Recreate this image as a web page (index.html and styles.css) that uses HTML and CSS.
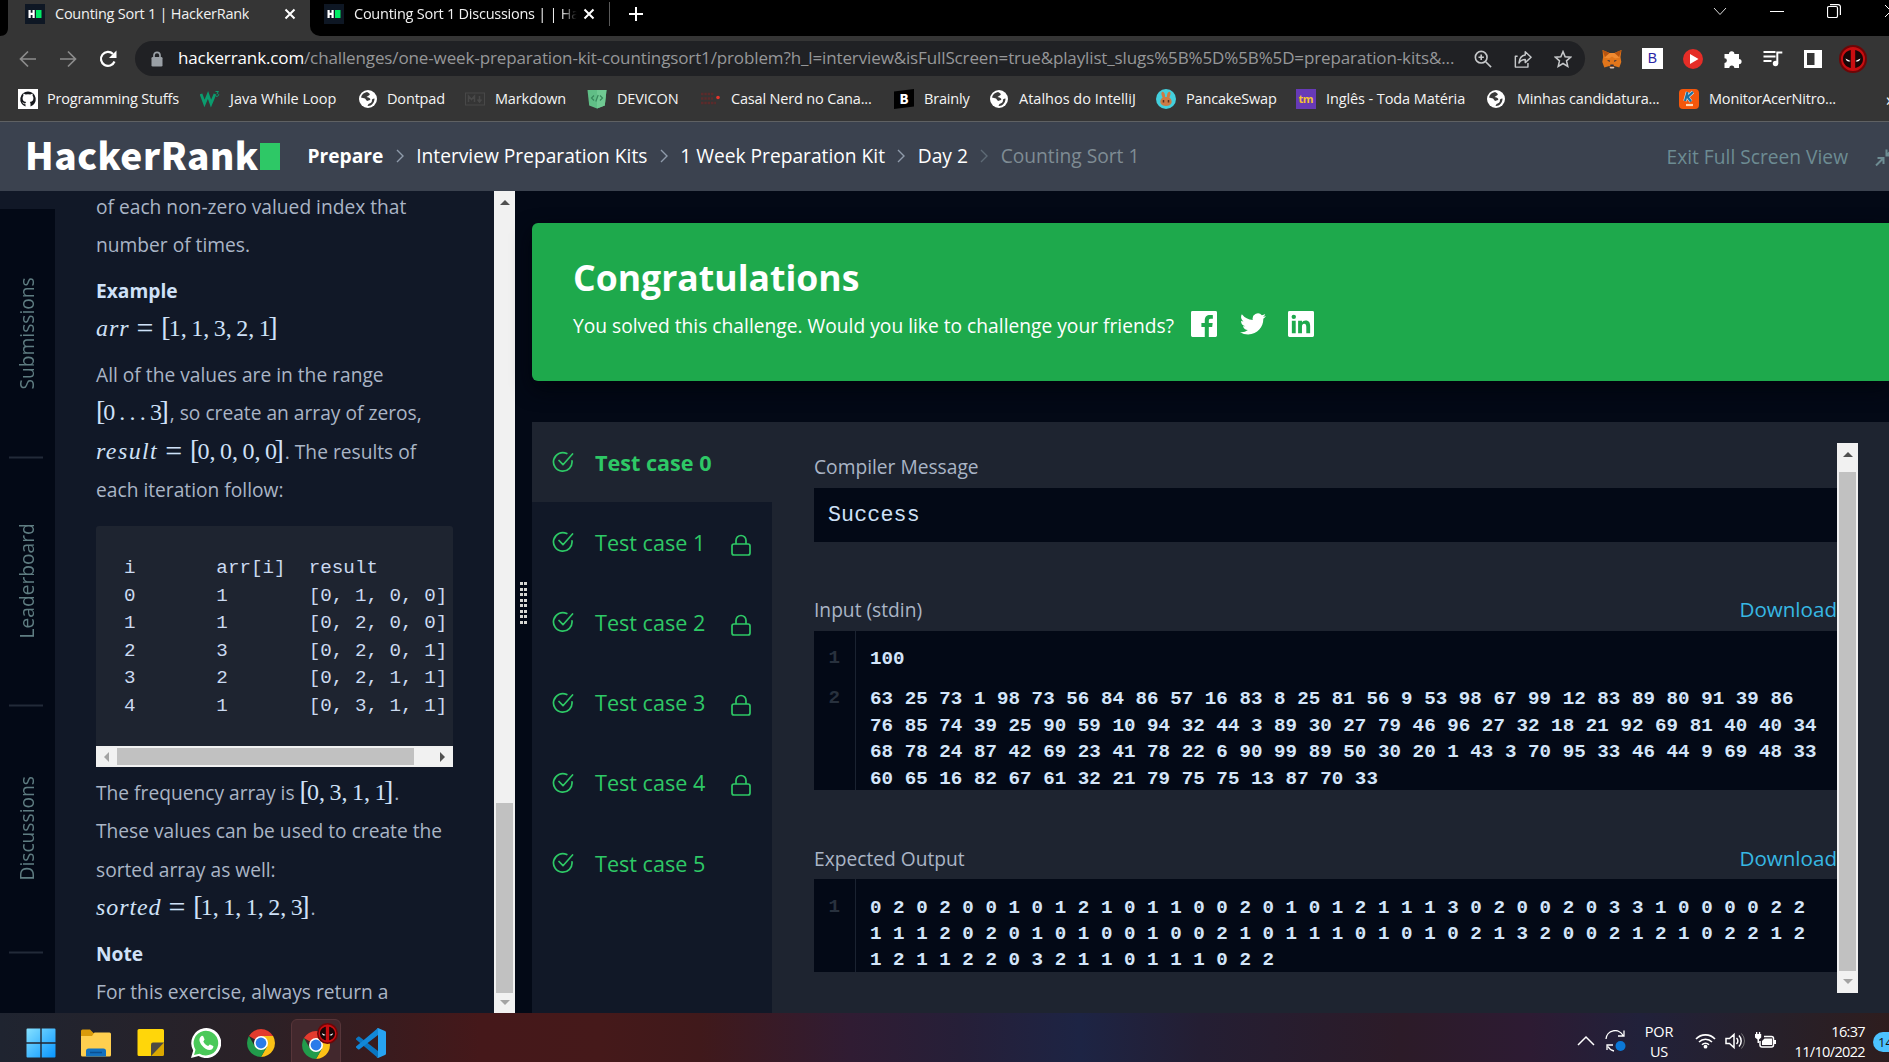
FILE: index.html
```html
<!DOCTYPE html>
<html lang="en">
<head>
<meta charset="utf-8">
<title>Counting Sort 1 | HackerRank</title>
<link rel="stylesheet" href="styles.css">
</head>
<body>
<svg class="defs" aria-hidden="true">
  <defs>
    <symbol id="hr" viewBox="0 0 20 20"><path fill="#0e1724" d="M0 0h20v20H0z"/><path fill="#fff" d="M3.5 6h2.2v2.8h1.8V6h2.2v8H7.500v-3H5.700v3H3.500z"/><path fill="#00ea64" d="M11 6h5.500v8H11z"/></symbol>
    <symbol id="close" viewBox="0 0 12 12"><path d="M1.500 1.500l9 9M10.500 1.500l-9 9" stroke="#fff" stroke-width="2" fill="none"/></symbol>
    <symbol id="chev" viewBox="0 0 8 16"><path d="M1 2l6 6-6 6" fill="none" stroke="currentColor" stroke-width="1.400"/></symbol>
    <symbol id="globe" viewBox="0 0 20 20"><circle cx="10" cy="10" r="9" fill="#fff"/><path fill="#3a3a3a" d="M9 3c-3 .5-5.500 2.500-6 5.500l4 1 2 2.500 3-1c1-1-.5-2-1.500-2.500l-2-.5 3-2c1-1-.5-2-2.500-3zM16.500 9.500c-2 0-3 1-2.500 2.500-.5 2-2 2.500-3.500 3L9.500 17c4 .3 7-3 7-7.500z"/></symbol>
    <symbol id="check" viewBox="0 0 22 22"><path d="M20 9.800A9.300 9.300 0 1 1 14.800 2.500M7 9.500l4 4.200L20.500 3" fill="none" stroke="#2ec866" stroke-width="1.700" stroke-linecap="round" stroke-linejoin="round"/></symbol>
    <symbol id="lock" viewBox="0 0 22 22"><rect x="2" y="10" width="18" height="11" rx="2" fill="none" stroke="#2ec866" stroke-width="1.700"/><path d="M6 10V6.500a5 5 0 0 1 10 0V10" fill="none" stroke="#2ec866" stroke-width="1.700"/></symbol>
    <symbol id="chrome" viewBox="0 0 28 28"><path fill="#e33b2e" d="M14 14L1.900 7A14 14 0 0 1 26.100 7z"/><path fill="#fbc116" d="M14 14V7h12.100A14 14 0 0 1 14 28l6-10.500z"/><path fill="#219b4b" d="M14 14l6 3.500L14 28A14 14 0 0 1 1.900 7L8 17.500z"/><circle cx="14" cy="14" r="7" fill="#fff"/><circle cx="14" cy="14" r="5.400" fill="#2a7be9"/></symbol>
    <symbol id="mask" viewBox="0 0 28 28"><circle cx="14" cy="14" r="13" fill="#c90d10" stroke="#6d0607" stroke-width="2"/><path fill="#170607" d="M11.800 5v18C7 22 4 18.500 4 14s3-8 7.800-9zM16.200 5v18c4.800-1 7.800-4.500 7.800-9s-3-8-7.800-9z"/><path fill="#fff" d="M6.500 13.500l5 2.500c-2 1.200-4.200.4-5-2.500zM21.500 13.500l-5 2.500c2 1.200 4.200.4 5-2.500z"/></symbol>
  </defs>
</svg>

<div class="tabs">
  <svg class="corner" viewBox="0 0 10 36"><path fill="#353535" d="M0 36c5 0 8-3 8-8V0h2v36z"/></svg>
  <div class="tab tab-active"><svg class="fav"><use href="#hr"/></svg><span class="tab-title">Counting Sort 1 | HackerRank</span><svg class="x"><use href="#close"/></svg></div>
  <div class="tab tab-back"><svg class="fav"><use href="#hr"/></svg><span class="tab-title fade">Counting Sort 1 Discussions | | Ha</span><svg class="x"><use href="#close"/></svg></div>
  <svg class="plus" viewBox="0 0 16 16"><path d="M8 1v14M1 8h14" stroke="#fff" stroke-width="2"/></svg>
  <div class="window-controls">
    <svg width="14" height="14" viewBox="0 0 14 14"><path d="M1 4l6 6.500L13 4" fill="none" stroke="#ddd"/></svg>
    <svg width="14" height="14" viewBox="0 0 14 14"><path d="M0 7.500h14" stroke="#fff"/></svg>
    <svg width="14" height="14" viewBox="0 0 14 14"><rect x=".5" y="2.500" width="10" height="11" rx="1.500" fill="none" stroke="#fff" stroke-width="1.200"/><path d="M3 .6h8a2.300 2.300 0 0 1 2.400 2.400v8" fill="none" stroke="#fff" stroke-width="1.200"/></svg>
    <svg width="14" height="14" viewBox="0 0 14 14"><path d="M1 1l12 12M13 1L1 13" stroke="#fff"/></svg>
  </div>
</div>

<div class="toolbar">
  <svg class="nav" viewBox="0 0 18 18"><path d="M17 9H2M9 1.500L1.500 9 9 16.500" fill="none" stroke="#8c8c8c" stroke-width="1.700"/></svg>
  <svg class="nav nav-fwd" viewBox="0 0 18 18"><path d="M1 9h15M9 1.500L16.500 9 9 16.500" fill="none" stroke="#8c8c8c" stroke-width="1.700"/></svg>
  <svg class="nav nav-reload" viewBox="0 0 18 18"><path d="M15.500 11.500A7 7 0 1 1 14 4" fill="none" stroke="#fff" stroke-width="2.200"/><path fill="#fff" d="M17.500.5v7.500H10z"/></svg>
  <div class="omnibox">
    <svg class="padlock" viewBox="0 0 12 16"><path d="M3 7V4.300a3 3 0 0 1 6 0V7" fill="none" stroke="#9aa0a6" stroke-width="1.700"/><rect x=".5" y="6" width="11" height="9.500" rx="1.300" fill="#9aa0a6"/></svg>
    <span class="url"><span class="host">hackerrank.com</span>/challenges/one-week-preparation-kit-countingsort1/problem?h_l=interview&amp;isFullScreen=true&amp;playlist_slugs%5B%5D%5B%5D=preparation-kits&amp;...</span>
    <svg class="omni-icon" viewBox="0 0 20 20"><g fill="none" stroke="#c6c8ca" stroke-width="1.800"><circle cx="8" cy="8" r="6.500"/><path d="M13 13l6 6M5 8h6M8 5v6"/></g></svg>
    <svg class="omni-icon" viewBox="0 0 20 20"><g fill="none" stroke="#c6c8ca" stroke-width="1.600"><path d="M4 7H1.500v12h14v-4.500M12.500 5.500V2L19 8l-6.500 6v-3.500C9 10.500 7 12 5.500 14.500 6 9 8.500 6 12.500 5.500z" stroke-linejoin="round"/></g></svg>
    <svg class="omni-icon" viewBox="0 0 20 20"><path d="M10 1.800l2.400 5.700 6.200.5-4.700 4.100 1.400 6.100L10 15l-5.300 3.200 1.400-6.100L1.400 8l6.200-.5z" fill="none" stroke="#c6c8ca" stroke-width="1.700"/></svg>
  </div>
  <div class="extensions">
    <svg viewBox="0 0 20 20"><path fill="#e2761b" d="M.5 1l7 3h5l7-3-1 7 .8 5-2 5.500-5-1.500-1 1h-3l-1-1-5 1.500-2-5.500.8-5z"/><path fill="#f08a30" d="M2 8.500L7.500 4h5L18 8.500l-5 1-3-2-3 2z"/><path fill="#b8540f" d="M.5 1l7 3L3 8zM19.500 1l-7 3L17 8z"/><path fill="#2c2f3e" d="M5 11l3 .5-.5 1.500zM15 11l-3 .5.5 1.500zM8.500 15.500h3L12 17.500H8z"/><path fill="#d7c1b3" d="M7.500 18h5l-.8 1.600H8.300z"/></svg>
    <span class="ext-b">B</span>
    <svg viewBox="0 0 20 20"><circle cx="10" cy="10" r="10" fill="#e52d27"/><path fill="#fff" d="M7 5l8.500 5L7 15z"/></svg>
    <svg viewBox="0 0 20 20"><path fill="#fff" d="M1.500 5H6a2.700 2.700 0 1 1 5.400 0H16v5a2.600 2.600 0 1 1 0 5.200V19h-4.700a2.500 2.500 0 0 0-5 0H1.500v-5a2.400 2.400 0 0 0 0-4.800z"/></svg>
    <svg viewBox="0 0 20 20"><path d="M.5 3h12M.5 7.500h12M.5 12h8" stroke="#fff" stroke-width="2"/><circle cx="12.500" cy="14.500" r="2.700" fill="#fff"/><path d="M14.300 14.500V3.500h5" fill="none" stroke="#fff" stroke-width="2"/></svg>
    <svg viewBox="0 0 20 20"><path fill="#fff" fill-rule="evenodd" d="M1 1h18v18H1zM4 4v12h7.500V4z"/></svg>
    <svg class="avatar"><use href="#mask"/></svg>
  </div>
</div>

<div class="bookmarks">
  <span class="bm"><svg viewBox="0 0 20 20"><path fill="#fff" d="M0 0h20v20H0z"/><path fill="#16181c" d="M10 2.500a7.700 7.700 0 0 0-2.500 15v-2.200c-2 .4-2.500-1-3.300-2 1.300-.2 1.500 1.700 3.300 1 .1-.6.4-1 .7-1.200-3-.4-4-2-3.500-5.100l.7-1.200-.1-2.300 2.400 1a8 8 0 0 1 4.600 0l2.400-1-.1 2.300.7 1.200c.5 3.100-.5 4.700-3.500 5.100.5.500.7 1.100.7 2v2.400A7.700 7.700 0 0 0 10 2.500z"/></svg>Programming Stuffs</span>
  <span class="bm"><svg viewBox="0 0 20 20"><path d="M1 5l3.500 9.500L8 6l3 8.500L15 5" fill="none" stroke="#0b9c6e" stroke-width="2.800"/><path d="M15.500 2.500h3l-1.500 2c3 .3 1.500 3.500-1 2.700" fill="none" stroke="#0b9c6e"/></svg>Java While Loop</span>
  <span class="bm"><svg><use href="#globe"/></svg>Dontpad</span>
  <span class="bm"><svg viewBox="0 0 20 20"><rect x=".5" y="4" width="19" height="12" fill="none" stroke="#484848"/><path d="M3.500 13V7l3 3.500 3-3.500v6M14.500 7v5M12.500 10.500l2 2.500 2-2.500" fill="none" stroke="#484848" stroke-width="1.500"/></svg>Markdown</span>
  <span class="bm"><svg viewBox="0 0 20 20"><path fill="#60be86" d="M.5 1h19l-1.700 15.500L10 19.500l-7.800-3z"/><path fill="#70c992" d="M10 1h9.500l-1.700 15.500L10 19.500z"/><path d="M7 6.500L4.500 9 7 11.500M13 6.500L15.500 9 13 11.500M11.200 6l-2.400 6.500" fill="none" stroke="#37875b" stroke-width="1.200"/></svg>DEVICON</span>
  <span class="bm"><svg viewBox="0 0 20 20"><path d="M1 5h13M1 9.500h12M1 14h15" stroke="#5b2b2b" stroke-width="2.500" stroke-dasharray="2.500 .8"/><circle cx="18" cy="8.500" r="1.800" fill="#e5352c"/></svg>Casal Nerd no Cana...</span>
  <span class="bm"><svg viewBox="0 0 20 20"><path d="M0 2.500L20 0v17.500L0 20z"/><text x="5.500" y="15" class="brainly">B</text></svg>Brainly</span>
  <span class="bm"><svg><use href="#globe"/></svg>Atalhos do IntelliJ</span>
  <span class="bm"><svg viewBox="0 0 20 20"><circle cx="10" cy="10" r="10" fill="#43cfdc"/><path fill="#cc7a45" d="M6 3c2-1 3 2 3.200 5h1.600C11 5 12 2 14 3c1.500 1-.2 4-.5 5.800 2 1.200 2.500 3.500 2 5.200-.8 2-2.800 3-5.500 3s-4.700-1-5.500-3c-.5-1.700 0-4 2-5.200C6.200 7 4.500 4 6 3z"/><path d="M7.500 11v2.500M12.500 11v2.500" stroke="#5a2d1a" stroke-width="1.500"/></svg>PancakeSwap</span>
  <span class="bm"><svg viewBox="0 0 20 20"><path fill="#673ab7" d="M0 0h20v20H0z"/><text x="2.500" y="14" class="tm">tm</text></svg>Inglês - Toda Matéria</span>
  <span class="bm"><svg><use href="#globe"/></svg>Minhas candidatura...</span>
  <span class="bm"><svg viewBox="0 0 20 20"><rect width="20" height="20" rx="4" fill="#f4570c"/><path d="M8.500 3L6 12M14 3L8.500 8l3.500 4.500" fill="none" stroke="#cfe6f5" stroke-width="3.400"/><path d="M8.500 3L6 12M14 3L8.500 8l3.500 4.500" fill="none" stroke="#1b6f9f" stroke-width="2.200"/><path d="M7 16h7" stroke="#ffd9b8" stroke-width="2.200"/></svg>MonitorAcerNitro...</span>
  <span class="more">»</span>
</div>

<header class="header">
  <div class="logo"><span class="logo-text">HackerRank</span><span class="logo-block"></span></div>
  <nav class="crumbs">
    <b>Prepare</b><svg><use href="#chev"/></svg>
    <span>Interview Preparation Kits</span><svg><use href="#chev"/></svg>
    <span>1 Week Preparation Kit</span><svg><use href="#chev"/></svg>
    <span>Day 2</span><svg class="dim"><use href="#chev"/></svg>
    <span class="current">Counting Sort 1</span>
  </nav>
  <div class="exit">Exit Full Screen View
    <svg viewBox="0 0 20 20"><path d="M1 18.500l7-7M2.500 11h6v6M19 1l-7 7M11.500 2.500v6h6" fill="none" stroke="#6d8c93" stroke-width="2"/></svg>
  </div>
</header>

<main class="main">
  <aside class="rail"><div>Submissions</div><div>Leaderboard</div><div>Discussions</div></aside>

  <section class="problem">
    <p class="intro">of each non-zero valued index that<br>number of times.</p>
    <p><b>Example</b><br><span class="math"><i>arr</i><span class="eq">=</span><span class="br">[</span>1<s>,</s>1<s>,</s>3<s>,</s>2<s>,</s>1<span class="br">]</span></span></p>
    <p>All of the values are in the range<br><span class="math"><span class="br">[</span>0<span class="dots">...</span>3<span class="br">]</span></span>, so create an array of zeros,<br><span class="math"><i class="wide">result</i><span class="eq">=</span><span class="br">[</span>0<s>,</s>0<s>,</s>0<s>,</s>0<span class="br">]</span></span>. The results of<br>each iteration follow:</p>
    <div class="sample">
      <pre>i       arr[i]  result
0       1       [0, 1, 0, 0]
1       1       [0, 2, 0, 0]
2       3       [0, 2, 0, 1]
3       2       [0, 2, 1, 1]
4       1       [0, 3, 1, 1]</pre>
      <div class="hbar"><span class="arrow left"></span><span class="hthumb"></span><span class="arrow right"></span></div>
    </div>
    <p>The frequency array is <span class="math"><span class="br">[</span>0<s>,</s>3<s>,</s>1<s>,</s>1<span class="br">]</span></span>.<br>These values can be used to create the<br>sorted array as well:<br><span class="math"><i>sorted</i><span class="eq">=</span><span class="br">[</span>1<s>,</s>1<s>,</s>1<s>,</s>2<s>,</s>3<span class="br">]</span></span>.</p>
    <p><b>Note</b><br>For this exercise, always return a</p>
  </section>

  <div class="vbar vbar-left"><span class="arrow up"></span><span class="vthumb"></span><span class="arrow down"></span></div>
  <div class="resizer"><span class="grip"></span></div>

  <section class="results">
    <div class="congrats">
      <h1>Congratulations</h1>
      <div class="share">You solved this challenge. Would you like to challenge your friends?
        <svg viewBox="0 0 27 27"><path fill="#fff" d="M1.500 0h24A1.500 1.500 0 0 1 27 1.500v24a1.500 1.500 0 0 1-1.500 1.500h-7V16.600H22l.5-4.100h-4V10c0-1.200.4-2 2-2h2.200V4.300C22.300 4.200 21 4.100 19.600 4.100c-3.100 0-5.300 1.900-5.300 5.400v3h-3.500v4.100h3.500V27H1.500A1.500 1.500 0 0 1 0 25.500v-24A1.500 1.500 0 0 1 1.500 0z"/></svg>
        <svg viewBox="0 0 24 24"><path fill="#fff" d="M24 4.600a10 10 0 0 1-2.800.8 5 5 0 0 0 2.100-2.700 10 10 0 0 1-3.100 1.200 4.900 4.900 0 0 0-8.400 4.500A14 14 0 0 1 1.700 3.100a4.900 4.900 0 0 0 1.500 6.600 5 5 0 0 1-2.200-.6v.1a4.900 4.900 0 0 0 3.900 4.800 5 5 0 0 1-2.200.1 4.900 4.900 0 0 0 4.600 3.400A10 10 0 0 1 0 19.500a14 14 0 0 0 7.500 2.200c9.100 0 14.300-7.700 14-14.600A10 10 0 0 0 24 4.600z"/></svg>
        <svg viewBox="0 0 27 27"><path fill="#fff" fill-rule="evenodd" d="M1.500 0h24A1.500 1.500 0 0 1 27 1.500v24a1.500 1.500 0 0 1-1.500 1.500h-24A1.500 1.500 0 0 1 0 25.500v-24A1.500 1.500 0 0 1 1.500 0zM4 10.200V23h4V10.200zM6 3.800a2.300 2.300 0 1 0 0 4.600 2.300 2.300 0 0 0 0-4.600zM10.500 10.200V23h4v-6.500c0-1.800.5-3.200 2.300-3.200s2.200 1.500 2.200 3.300V23h4v-7.200c0-3.600-1-6-4.700-6-1.900 0-3.200 1-3.800 2.100v-1.700z"/></svg>
      </div>
    </div>
    <div class="panel">
      <ul class="cases">
        <li class="on"><svg><use href="#check"/></svg><span>Test case 0</span></li>
        <li><svg><use href="#check"/></svg><span>Test case 1</span><svg class="lk"><use href="#lock"/></svg></li>
        <li><svg><use href="#check"/></svg><span>Test case 2</span><svg class="lk"><use href="#lock"/></svg></li>
        <li><svg><use href="#check"/></svg><span>Test case 3</span><svg class="lk"><use href="#lock"/></svg></li>
        <li><svg><use href="#check"/></svg><span>Test case 4</span><svg class="lk"><use href="#lock"/></svg></li>
        <li><svg><use href="#check"/></svg><span>Test case 5</span></li>
      </ul>
      <div class="output">
        <div class="label first">Compiler Message</div>
        <div class="message">Success</div>
        <div class="label">Input (stdin)<a>Download</a></div>
        <div class="code input">
          <span class="num">1</span><pre>100</pre>
          <span class="num">2</span><pre>63 25 73 1 98 73 56 84 86 57 16 83 8 25 81 56 9 53 98 67 99 12 83 89 80 91 39 86
76 85 74 39 25 90 59 10 94 32 44 3 89 30 27 79 46 96 27 32 18 21 92 69 81 40 40 34
68 78 24 87 42 69 23 41 78 22 6 90 99 89 50 30 20 1 43 3 70 95 33 46 44 9 69 48 33
60 65 16 82 67 61 32 21 79 75 75 13 87 70 33</pre>
        </div>
        <div class="label label-expected">Expected Output<a>Download</a></div>
        <div class="code expected">
          <span class="num">1</span><pre>0 2 0 2 0 0 1 0 1 2 1 0 1 1 0 0 2 0 1 0 1 2 1 1 1 3 0 2 0 0 2 0 3 3 1 0 0 0 0 2 2
1 1 1 2 0 2 0 1 0 1 0 0 1 0 0 2 1 0 1 1 1 0 1 0 1 0 2 1 3 2 0 0 2 1 2 1 0 2 2 1 2
1 2 1 1 2 2 0 3 2 1 1 0 1 1 1 0 2 2</pre>
        </div>
      </div>
      <div class="vbar vbar-out"><span class="arrow up"></span><span class="vthumb"></span><span class="arrow down"></span></div>
    </div>
  </section>
</main>

<footer class="taskbar">
  <div class="apps">
    <svg class="app" viewBox="0 0 30 30"><defs><linearGradient id="win" x1="0" y1="0" x2="1" y2="1"><stop offset="0" stop-color="#86e1ff"/><stop offset="1" stop-color="#0795ff"/></linearGradient></defs><path fill="url(#win)" d="M.5 1.500A1 1 0 0 1 1.500.5h12.800v13.800H.5zM15.700.5h12.800a1 1 0 0 1 1 1v12.800H15.700zM.5 15.700h13.800v13.800H1.500a1 1 0 0 1-1-1zM15.700 15.700h13.800v12.800a1 1 0 0 1-1 1H15.700z"/></svg>
    <svg class="app" viewBox="0 0 30 30"><path fill="#d99a0b" d="M0 3a1.500 1.500 0 0 1 1.500-1.500H9l3.500 3.500H28v8H0z"/><path fill="#ffcf4f" d="M0 8h11l2.500-3.500H28.500A1.500 1.500 0 0 1 30 6v21a1.500 1.500 0 0 1-1.500 1.500h-27A1.500 1.500 0 0 1 0 27z"/><path fill="#1371bf" d="M5 28.500v-5.500a2.500 2.500 0 0 1 2.500-2.500h15a2.500 2.500 0 0 1 2.500 2.500v5.500z"/><path d="M9 24.500h12" stroke="#0b4f91" stroke-width="1.500"/></svg>
    <svg class="app" viewBox="0 0 30 30"><path fill="#ffd60a" d="M3 1h23.500A1.500 1.500 0 0 1 28 2.500V15L15 28H3a1.500 1.500 0 0 1-1.500-1.500v-24A1.500 1.500 0 0 1 3 1z"/><path fill="#dba800" d="M28 14v12.500a1.500 1.500 0 0 1-1.500 1.500H15z"/><path fill="#4c4a44" d="M15 16.500a2 2 0 0 1 2-2H28L15 28z"/></svg>
    <svg class="app" viewBox="0 0 30 30"><path fill="#fff" d="M0 30l2.200-7.500A15 15 0 1 1 7.600 28z"/><path fill="#4ac959" d="M3 27l1.500-5.300a12.300 12.300 0 1 1 4.100 4z"/><path fill="#fff" d="M10.500 8c.5-.4 1.300-.4 1.700.3l1.300 3c.2.6-.8 1.600-1.200 2.100 1 2.300 2.600 3.700 4.800 4.600.6-.5 1.200-1.800 1.900-1.600l3.200 1.600c.6.500-.3 2.700-1.200 3.300-3 2-7.500-.9-10-3.900-2.800-3.300-3.800-7-.5-9.400z"/></svg>
    <svg class="app chrome-app"><use href="#chrome"/></svg>
    <div class="active-app"><svg><use href="#chrome"/></svg><svg class="badge" viewBox="0 0 28 28"><use href="#mask"/></svg></div>
    <svg class="app" viewBox="0 0 30 30"><path fill="#0a75c1" d="M0 10.500l2-1.700c.5-.4 1-.3 1.500 0L22 23v7L.3 11.800c-.5-.4-.6-.9-.3-1.300z"/><path fill="#1288d8" d="M0 19.500l2 1.700c.5.400 1 .3 1.500 0L22 7V0L.3 18.200c-.5.400-.6.900-.3 1.300z"/><path fill="#27a3f2" d="M22 0l7 3c.6.300 1 .8 1 1.500v21c0 .7-.4 1.200-1 1.500l-7 3c-.7.200-1.200 0-1.500-.4.900.4 1.500-.3 1.500-1.200V1.600C22 .7 21.400 0 20.500.4c.3-.4.8-.6 1.500-.4z"/></svg>
  </div>
  <div class="tray">
    <svg class="caret" viewBox="0 0 18 18"><path d="M1 13l8-8 8 8" fill="none" stroke="#fff" stroke-width="1.500"/></svg>
    <svg class="sync" viewBox="0 0 21 22"><path d="M1 9a9 9 0 0 1 17-3.500M19 .5V6h-6M2 20v-5h6M3 16.500A9 9 0 0 0 9 21" fill="none" stroke="#fff" stroke-width="1.300"/><circle cx="15.500" cy="16" r="5" fill="#0b78d7"/></svg>
    <div class="lang">POR<br>US</div>
    <svg class="wifi" viewBox="0 0 21 17"><g fill="none" stroke="#fff" stroke-width="1.600"><path d="M1 7a13 13 0 0 1 19 0M4 10a9 9 0 0 1 13 0M7 12.800a5 5 0 0 1 7 0"/></g><circle cx="10.500" cy="14.700" r="1.900" fill="#fff"/></svg>
    <svg class="sound" viewBox="0 0 20 18"><path d="M1 6.500v5h3.500L9 15.500v-13L4.500 6.500zM11.500 6a4 4 0 0 1 0 6M14 3.500a8 8 0 0 1 0 11" fill="none" stroke="#fff" stroke-width="1.500"/><path d="M16.500 1.500a11 11 0 0 1 0 15" fill="none" stroke="#777"/></svg>
    <svg class="battery" viewBox="0 0 21 18"><path d="M9 4.500h7.500a2 2 0 0 1 2 2v6.500a2 2 0 0 1-2 2H7a2 2 0 0 1-2-2V9" fill="none" stroke="#fff" stroke-width="1.500"/><path fill="#fff" d="M9.500 6.500H17v6.500H7V9zM19 8h2v4h-2zM0 2h1V0h1.300v2h1.600V0h1.300v2h1v3.500L4 7.500V11H2.500V7.500L0 5.500z"/></svg>
    <div class="clock">16:37<br>11/10/2022</div>
    <div class="notify">14</div>
  </div>
</footer>
</body>
</html>
```
FILE: styles.css
```css
* { box-sizing: border-box; }
html, body { margin: 0; height: 1062px; overflow: hidden; }
body {
  width: 1889px;
  display: flex;
  flex-direction: column;
  background: #030916;
  font-family: "Open Sans", "Noto Sans", sans-serif;
  font-size: 19.2px;
  color: #aab5c6;
}
svg { display: block; flex: none; }
.defs { position: absolute; width: 0; height: 0; }

/* Browser tabs */
.tabs { flex: none; height: 36px; background: #000; display: flex; }
.corner { width: 10px; height: 36px; }
.tab { display: flex; align-items: center; width: 300px; height: 36px; padding: 0 14px 8px 15px; flex: none; }
.tab-back { padding: 0 0 8px 14px; background: #000; border-bottom-left-radius: 10px; }
.tab-back::after { content: ""; width: 1px; height: 24px; background: #5a5a5a; margin-left: 14px; }
.tab-active { background: #353535; box-shadow: 10px 0 0 #353535; clip-path: inset(0 -10px 0 0); }
.tab-title { color: #f1f1f1; font-size: 14.5px; letter-spacing: -.25px; line-height: 20px; margin: -1px auto 0 10px; white-space: nowrap; overflow: hidden; }
.tab-back { position: relative; }
.fade { flex: none; width: 225px; margin-right: 4px; -webkit-mask-image: linear-gradient(90deg, #000 92%, transparent 99%); mask-image: linear-gradient(90deg, #000 92%, transparent 99%); }
.fav { width: 20px; height: 20px; }
.x { width: 12px; height: 12px; }
.plus { width: 16px; height: 16px; margin: 6px 0 0 18px; }
.window-controls { display: flex; gap: 43px; margin: 4px -10px 0 auto; width: 186px; flex: none; }

/* Toolbar */
.toolbar { flex: none; height: 45px; background: #353535; display: flex; align-items: center; padding: 0 0 0 19px; }
.nav { width: 18px; height: 18px; }
.nav-fwd { margin-left: 22px; }
.nav-reload { margin-left: 22px; }
.omnibox { flex: none; width: 1450px; height: 35px; margin-left: 18px; border-radius: 18px; background: #202124; display: flex; align-items: center; padding-left: 16px; }
.padlock { width: 12px; height: 16px; }
.url { width: 1281px; flex: none; margin: -1px 15px 0 15px; color: #969799; font-size: 17px; letter-spacing: -.125px; line-height: 24px; white-space: nowrap; }
.host { color: #fff; }
.omni-icon { width: 18px; height: 18px; margin-right: 22px; }
.omni-icon:last-child { margin-right: 0; }
.extensions { display: flex; align-items: center; gap: 20px; margin-left: 17px; }
.extensions svg { width: 20px; height: 20px; }
.extensions .avatar { width: 28px; height: 28px; margin-left: -4px; }
.ext-b { width: 21px; height: 21px; background: #fff; color: #2b25a5; font: 14px/21px "Liberation Sans", sans-serif; text-align: center; }

/* Bookmarks */
.bookmarks { flex: none; height: 41px; background: #353535; border-bottom: 1px solid #5f6163; display: flex; align-items: center; padding: 0 0 5px 18px; color: #f4f4f4; font-size: 14.5px; letter-spacing: -.17px; white-space: nowrap; }
.bm { display: flex; align-items: center; gap: 9px; flex: none; width: 182px; height: 22px; line-height: 20px; }
.bm svg { width: 20px; height: 20px; }
.bm:nth-child(2) { width: 158px; gap: 10px; letter-spacing: 0; }
.bm:nth-child(3) { width: 107px; }
.bm:nth-child(4) { width: 122px; gap: 10px; }
.bm:nth-child(5) { width: 113px; gap: 10px; }
.bm:nth-child(6) { width: 194px; gap: 11px; }
.bm:nth-child(7) { width: 95px; gap: 10px; }
.bm:nth-child(8) { width: 167px; gap: 10px; letter-spacing: 0; }
.bm:nth-child(9) { width: 140px; gap: 10px; }
.bm:nth-child(10) { width: 190px; gap: 10px; letter-spacing: -.1px; }
.bm:nth-child(11) { width: 193px; gap: 11px; }
.bm:nth-child(12) { width: 207px; gap: 10px; }
.more { font-size: 18px; }
.brainly { font: 900 13px "Noto Sans CJK SC", sans-serif; fill: #fff; }
.tm { font: 700 11px "Open Sans", sans-serif; fill: #f5c431; letter-spacing: -.5px; }

/* HackerRank header */
.header { flex: none; height: 69px; background: #3b424f; display: flex; align-items: center; padding-left: 25px; color: #fff; white-space: nowrap; }
.logo { display: flex; align-items: center; width: 282.500px; }
.logo-text { margin-top: -5px; font: 900 37px/40px "Noto Sans CJK SC", "Open Sans", sans-serif; letter-spacing: .55px; }
.logo-block { width: 20px; height: 27px; background: #2ec866; margin-left: 1px; }
.crumbs { display: flex; align-items: center; gap: 12.400px; margin-top: -2px; }
.crumbs svg { width: 8px; height: 16px; color: #8f9bab; }
.crumbs .dim { color: #5e6a76; }
.current { color: #7f8c94; }
.exit { margin: 0 -6px 0 auto; display: flex; align-items: center; gap: 27px; color: #6d8c93; }
.exit svg { width: 20px; height: 20px; }

/* Main split */
.main { height: 822px; flex: none; display: flex; }
.rail { width: 55px; padding-top: 20px; background: linear-gradient(#111827 18px, #030916 18px); color: #5f7d82; }
.rail div { height: 247.500px; writing-mode: vertical-rl; transform: rotate(180deg); display: flex; align-items: center; justify-content: center; line-height: 27px; padding: 3px 13px 0 15px; width: 55px; background: linear-gradient(#222a38, #222a38) 12px 0 / 34px 2px no-repeat; }
.problem { width: 439px; padding-left: 41px; background: #111827; line-height: 38.5px; white-space: nowrap; overflow: hidden; }
.problem p { margin: 0 0 7px; }
.problem .intro { margin-top: -3.500px; }
.problem b, .math { color: #cfe1f8; }
.math { font-family: "Liberation Serif", serif; font-size: 24px; line-height: 0; }
.math i { letter-spacing: .9px; }
.math .wide { letter-spacing: 1.400px; }
.math s { text-decoration: none; margin-right: 4.500px; }
.eq { font-size: 30px; margin: 0 8px 0 7px; position: relative; top: 2px; }
.br { font-size: 28px; margin-right: -2px; }
.br:last-child { margin-left: -2.500px; margin-right: 1px; }
.dots { letter-spacing: 4.200px; margin-left: 4px; }
.sample { width: 357px; margin: 16.500px 0 6.500px; background: #1e2430; border-radius: 3px 3px 0 0; }
pre { margin: 0; font-family: "Liberation Mono", monospace; font-size: 19.200px; letter-spacing: .03px; }
.sample pre { height: 220px; padding: 29px 0 0 28px; line-height: 27.600px; color: #cbdaf0; overflow: hidden; }

/* Scrollbars */
.hbar { height: 21px; background: #f1f1f1; display: flex; align-items: center; padding: 0 8px; }
.hthumb { width: 297px; height: 17px; background: #c1c1c1; margin-left: 8px; margin-right: auto; }
.vbar { width: 21px; background: #f1f1f1; display: flex; flex-direction: column; align-items: center; padding: 9px 0 8px; }
.vthumb { width: 17px; background: #c1c1c1; }
.vbar-left .vthumb { height: 190px; margin-top: auto; margin-bottom: 7px; }
.vbar-out { height: 550px; margin-top: 21px; }
.vbar-out .vthumb { height: 499px; margin: 15px 0 8px; }
.arrow { width: 0; height: 0; border: 5px solid transparent; flex: none; }
.up { border-top: 0; border-bottom-color: #505050; }
.down { border-bottom: 0; border-top-color: #a3a3a3; }
.left { border-left: 0; border-right-color: #a3a3a3; }
.right { border-right: 0; border-left-color: #505050; }

.resizer { width: 17px; display: flex; align-items: center; justify-content: center; }
.grip { width: 7px; height: 42px; margin: 1px 0 0; background: linear-gradient(90deg, transparent 3px, #030916 3px 4px, transparent 4px), repeating-linear-gradient(#d8d8d4 0 3px, #030916 3px 5.500px); }

/* Results */
.results { width: 1357px; padding-top: 32px; }
.congrats { height: 158px; background: #1ea94c; border-radius: 6px 0 0 6px; padding: 30px 0 0 41px; color: #fff; box-shadow: 0 8px 20px #02050d; }
.congrats h1 { margin: 0 0 10px; font-size: 35.600px; line-height: 48px; }
.share { display: flex; align-items: center; line-height: 30px; white-space: nowrap; letter-spacing: .01px; }
.share svg { width: 26px; height: 26px; margin: -4px 2px 0 17.500px; }
.share svg + svg { margin-left: 20.300px; }
.panel { height: 591px; margin-top: 41px; background: #1e2430; display: flex; }
.cases { width: 240px; margin: 0; padding: 0; list-style: none; background: #111827; color: #2ec866; font-size: 21.600px; }
.cases li { height: 80.200px; display: flex; align-items: center; padding-left: 20px; }
.cases li svg { width: 22px; height: 22px; }
.cases li span { width: 135px; margin-left: 21px; white-space: nowrap; }
.cases .lk { margin-top: 5px; }
.on { background: #1e2430; font-weight: 700; }
.output { width: 1023px; margin: 21px 0 0 42px; }
.label { height: 42px; margin-top: 47px; line-height: 42px; display: flex; justify-content: space-between; }
.first { margin-top: 3px; }
.label a { color: #37b8e3; font-size: 20.600px; line-height: 40px; }
.label-expected, .label-expected a { line-height: 43px; }
.message { height: 54px; background: #030916; padding-left: 14px; color: #cfe1f8; font: 21.600px/55px "Liberation Mono", monospace; letter-spacing: .15px; }
.code { display: grid; grid-template-columns: 42px 1fr; align-content: start; row-gap: 14px; overflow: hidden; padding-top: 15px; color: #d3e5fa; background: linear-gradient(90deg, #030916 41px, #1b2331 41px 42px, #030916 42px); }
.input { height: 159px; }
.expected { height: 93px; padding-top: 15.500px; }
.code pre { padding-left: 14px; font-weight: 700; line-height: 26.400px; }
.num { font: 700 19.200px/25px "Liberation Mono", monospace; color: #28313e; padding-left: 14.500px; }

/* Taskbar */
.taskbar { flex: none; height: 49px; display: flex; justify-content: space-between; color: #fff; background: linear-gradient(90deg, #1f2430 0, #2a2127 250px, #3a1b1e 390px, #45181a 480px, #45191a 600px, #40191b 700px, #301c33 850px, #261f38 960px, #1d2444 1080px, #241e33 1200px, #2c1b28 1400px, #2d1b33 1530px, #21213a 1640px, #272029 1780px, #2e1d1e 1889px); }
.apps { display: flex; align-items: center; padding: 13px 0 0 26px; }
.app { width: 30px; height: 30px; margin-right: 25px; margin-top: -3px; }
.apps .chrome-app { width: 28px; height: 28px; margin: -3px 16px 0 1px; }
.active-app { position: relative; width: 50px; height: 45px; margin: -6px 15px 0 0; padding: 11px 10px; border: 1px solid #573539; border-radius: 6px 6px 0 0; background: #42282d; }
.active-app svg { width: 28px; height: 28px; }
.active-app .badge { position: absolute; width: 21px; height: 21px; left: 25px; top: 3px; }
.tray { display: flex; align-items: center; font-size: 14.500px; line-height: 20px; padding-top: 13px; }
.caret { width: 18px; height: 18px; }
.sync { width: 21px; height: 22px; margin-left: 10px; }
.lang { width: 40px; margin-left: 13px; text-align: center; letter-spacing: -.2px; }
.wifi { width: 21px; height: 17px; margin-left: 16px; }
.sound { width: 20px; height: 18px; margin-left: 9px; }
.battery { width: 21px; height: 18px; margin-left: 10px; }
.clock { width: 80px; margin-left: 9px; text-align: right; letter-spacing: -.65px; }
.notify { width: 16px; height: 20px; margin: -5px 0 0 8px; padding-left: 5px; border-radius: 10px 0 0 10px; background: #4cc2ff; color: #111; font-size: 13px; overflow: hidden; }
.tray svg { margin-top: -7px; }
.tray .lang, .tray .clock { margin-top: -4px; }
```
